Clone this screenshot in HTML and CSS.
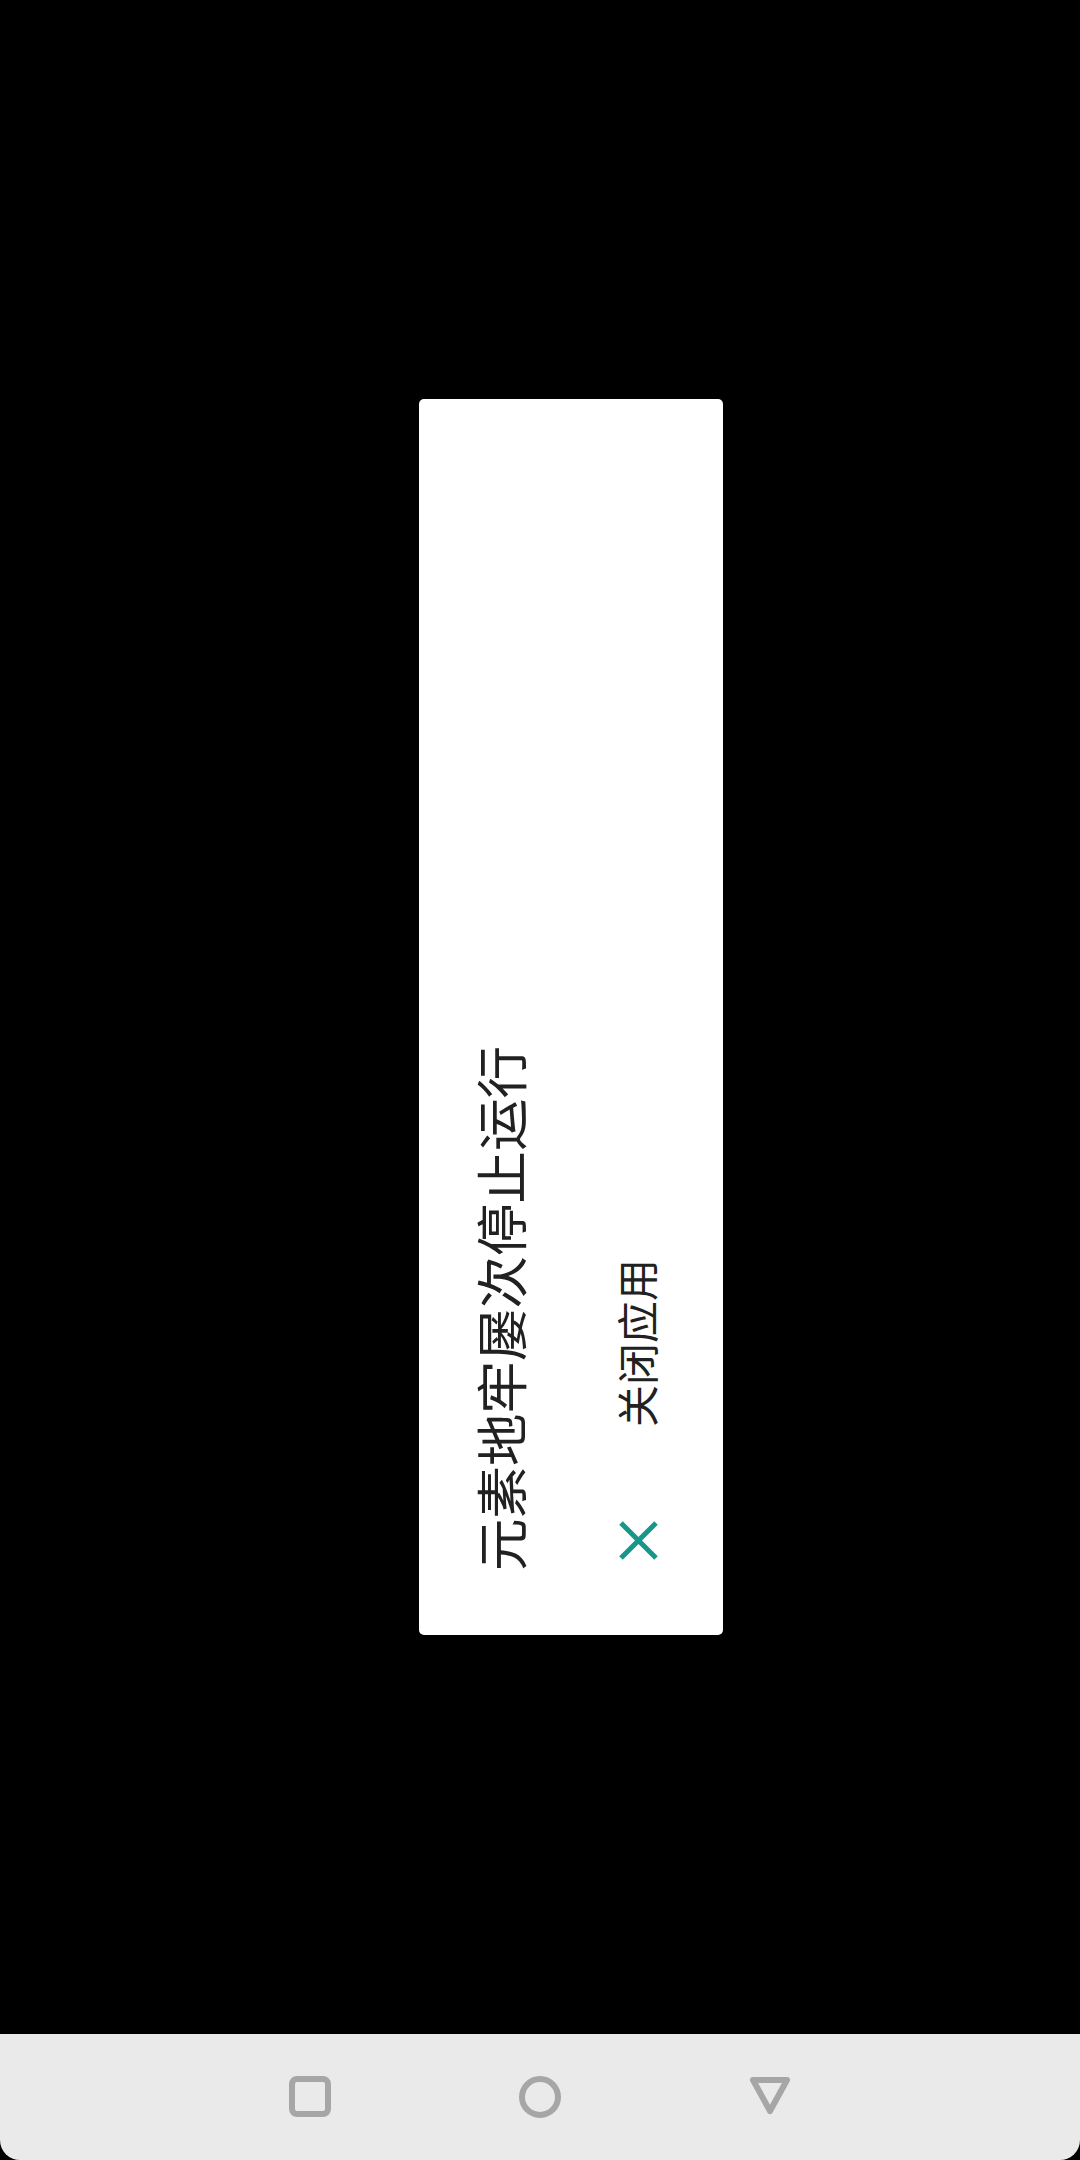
FILE: index.html
```html
<!DOCTYPE html>
<html>
<head>
	<meta charset="utf-8">
	<title>元素地牢屡次停止运行</title>
	<link rel="stylesheet" href="styles.css">
</head>
<body>
	<!-- 崩溃提示框（横屏应用，整体旋转显示） -->
	<section class="screen">
		<div class="dialog">
			<h3 class="dialog-title">元素地牢屡次停止运行</h3>
			<div class="dialog-action">
				<svg class="action-icon" width="63" height="63" viewBox="0 0 63 63">
					<path d="M14 14L49 49M49 14L14 49" stroke="#17968a" stroke-width="5" fill="none"/>
				</svg>
				<span class="action-text">关闭应用</span>
			</div>
		</div>
	</section>
	<!-- 底部导航栏 -->
	<nav class="navbar">
		<svg class="nav-icon" width="42" height="42" viewBox="0 0 42 42">
			<rect x="3" y="3" width="36" height="35" rx="5" stroke="#a6a6a6" stroke-width="6" fill="none"/>
		</svg>
		<svg class="nav-icon" width="42" height="42" viewBox="0 0 42 42">
			<circle cx="21" cy="21" r="18" stroke="#a6a6a6" stroke-width="6" fill="none"/>
		</svg>
		<svg class="nav-icon" width="42" height="42" viewBox="0 0 42 42">
			<path d="M4 4L38 4L21 35Z" stroke="#a6a6a6" stroke-width="6" stroke-linejoin="round" fill="none"/>
		</svg>
	</nav>
</body>
</html>
```

FILE: styles.css
```css
*{margin: 0;padding: 0;box-sizing: border-box;}
html,body{width: 1080px;height: 2160px;}
body{background-color: #000;font-family: "Noto Sans CJK SC", "Noto Sans", sans-serif;display: flex;flex-direction: column;overflow: hidden;}
.screen{flex: 1;display: flex;align-items: center;justify-content: center;padding-left: 62px;}
.dialog{width: 304px;height: 1236px;background-color: #fff;border-radius: 5px;writing-mode: vertical-rl;text-orientation: sideways;transform: rotate(180deg);padding-block-start: 49px;padding-inline-start: 64px;display: flex;flex-direction: column;}
.dialog-title{font-size: 52.5px;line-height: 63px;font-weight: normal;color: #212121;white-space: nowrap;}
.dialog-action{display: flex;flex-direction: row;align-items: center;block-size: 127px;margin-block-start: 44px;margin-inline-start: -1px;}
.action-icon{display: block;flex-shrink: 0;}
.action-text{font-size: 42px;line-height: 50px;color: #212121;margin-inline-start: 82px;margin-block-start: -5px;white-space: nowrap;flex-shrink: 0;}
.navbar{height: 126px;background-color: #eaeaea;border-radius: 0 0 20px 20px;display: flex;align-items: center;justify-content: center;gap: 188px;}
.nav-icon{display: block;}
```
